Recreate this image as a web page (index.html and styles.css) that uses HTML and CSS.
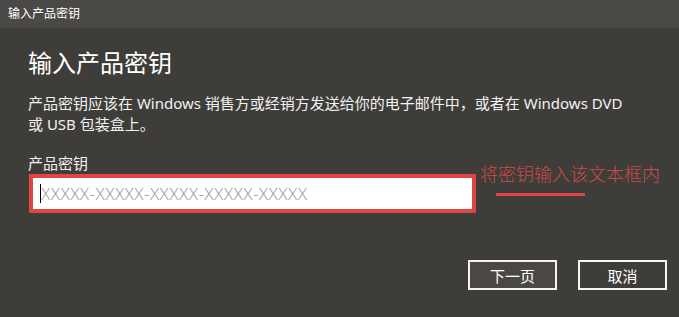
FILE: index.html
```html
<!DOCTYPE html>
<html lang="zh-CN">
<head>
<meta charset="utf-8">
<title>输入产品密钥</title>
<link rel="stylesheet" href="styles.css">
</head>
<body>
<div class="window">
  <div class="titlebar">输入产品密钥</div>
  <div class="content">
    <h1 class="heading">输入产品密钥</h1>
    <p class="desc">产品密钥应该在 Windows 销售方或经销方发送给你的电子邮件中，或者在 Windows DVD<br>或 USB 包装盒上。</p>
    <div class="label">产品密钥</div>
    <div class="field-row">
      <div class="highlight">
        <div class="input"><span class="caret"></span><span class="placeholder">XXXXX-XXXXX-XXXXX-XXXXX-XXXXX</span></div>
      </div>
      <div class="note">
        <div class="note-text">将密钥输入该文本框内</div>
        <div class="note-line"></div>
      </div>
    </div>
    <div class="actions">
      <div class="btn btn-primary">下一页</div>
      <div class="btn">取消</div>
    </div>
  </div>
</div>
</body>
</html>
```
FILE: styles.css
```css
html, body {
  margin: 0;
  padding: 0;
}
body {
  background: #3f3d3a;
  color: #ffffff;
  font-family: "Noto Sans", "Noto Sans CJK SC", sans-serif;
  width: 679px;
  height: 317px;
  overflow: hidden;
}
.window {
  display: flex;
  flex-direction: column;
}
.titlebar {
  height: 28px;
  line-height: 28px;
  background: #4b4946;
  font-size: 12px;
  padding-left: 8px;
  color: #ffffff;
}
.content {
  padding: 19px 12px 0 28px;
  display: flex;
  flex-direction: column;
}
.heading {
  margin: 0;
  font-size: 24px;
  font-weight: normal;
  line-height: 32px;
}
.desc {
  margin: 14px 0 0 0;
  font-size: 15px;
  line-height: 21px;
  color: #f2f2f2;
}
.label {
  margin-top: 18px;
  font-size: 15px;
  line-height: 20px;
  color: #f2f2f2;
}
.field-row {
  position: relative;
  display: flex;
  margin-top: 1px;
}
.highlight {
  margin-left: 1px;
  width: 439px;
  height: 31px;
  border: 4px solid #e04444;
  background: #ffffff;
}
.input {
  display: flex;
  align-items: center;
  height: 31px;
  padding-left: 7px;
}
.caret {
  width: 1px;
  height: 19px;
  background: #000000;
}
.placeholder {
  font-size: 17px;
  color: #a2a2a2;
  font-weight: 300;
  letter-spacing: 0.4px;
}
.note {
  position: absolute;
  left: 452px;
  top: -12px;
  display: flex;
  flex-direction: column;
}
.note-text {
  font-size: 18px;
  line-height: 24px;
  color: #cc4a4a;
  font-weight: 300;
}
.note-line {
  margin-top: 7px;
  margin-left: 16px;
  width: 89px;
  height: 3px;
  background: #e04444;
}
.actions {
  display: flex;
  justify-content: flex-end;
  gap: 21px;
  margin-top: 47px;
}
.btn {
  width: 85px;
  height: 26px;
  border: 2px solid #f4f4f4;
  display: flex;
  align-items: center;
  justify-content: center;
  font-size: 15px;
  color: #ffffff;
  background: #3f3d3a;
}
.btn-primary {
  background: #4a4744;
}
```
